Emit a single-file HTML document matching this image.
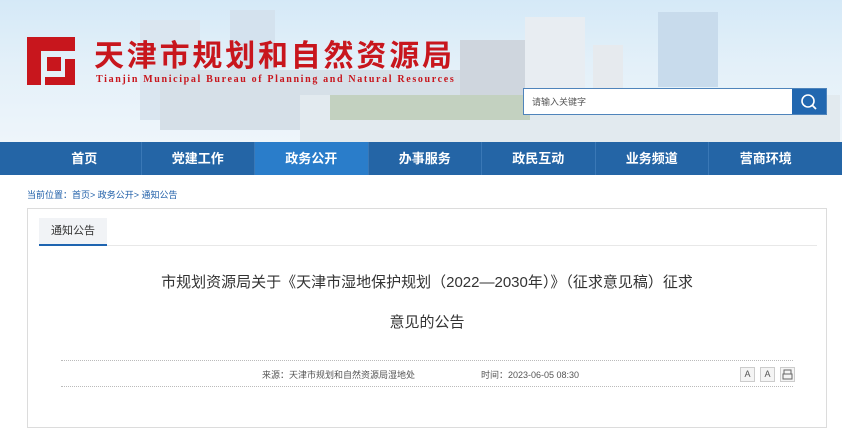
<!DOCTYPE html>
<html><head><meta charset="utf-8"><style>
*{margin:0;padding:0;box-sizing:border-box}
body{width:842px;height:414px;overflow:hidden;background:#fff;font-family:"Liberation Sans","Noto Sans CJK SC",sans-serif;position:relative}
.hdr{position:absolute;left:0;top:0;width:842px;height:142px;background:linear-gradient(180deg,#d5e9f7 0%,#e3f0f9 45%,#eef5fa 100%);overflow:hidden}
.b{position:absolute;background:#c9d8e6}
.nav{position:absolute;top:142px;left:0;width:842px;height:33px;background:#2465a6;display:flex;padding-left:28px}
.nav div{width:113.5px;height:33px;line-height:33px;text-align:center;color:#fff;font-size:13px;font-weight:bold;border-right:1px solid #3a78b6}
.nav div.on{background:#2a7dca}
</style></head><body>
<div class="hdr">
 <div class="b" style="left:140px;top:20px;width:60px;height:100px;background:#dae6f0"></div>
 <div class="b" style="left:230px;top:10px;width:45px;height:110px;background:#d4e2ee"></div>
 <div class="b" style="left:160px;top:70px;width:300px;height:60px;background:#d6e0e8"></div>
 <div class="b" style="left:460px;top:40px;width:100px;height:80px;background:#cfd6de"></div>
 <div class="b" style="left:525px;top:17px;width:60px;height:75px;background:#e8edf2"></div>
 <div class="b" style="left:593px;top:45px;width:30px;height:50px;background:#e6eaee"></div>
 <div class="b" style="left:658px;top:12px;width:60px;height:75px;background:#c8dbec"></div>
 <div class="b" style="left:300px;top:95px;width:540px;height:47px;background:#e2eaef"></div>
 <div class="b" style="left:330px;top:95px;width:200px;height:25px;background:#c3d1c0"></div>
 <svg style="position:absolute;left:27px;top:37px" width="48" height="48" viewBox="0 0 48 48"><path fill="#c8161d" d="M0 0H48V14H14V48H0Z M20 20H34V34H20Z M38 22H48V48H18V40H38Z"/></svg>
 <div style="position:absolute;left:94px;top:36px;font-size:30px;font-weight:bold;color:#c8161d;letter-spacing:2.8px;white-space:nowrap;font-family:'Noto Sans CJK SC',sans-serif;line-height:34px">天津市规划和自然资源局</div>
 <div style="position:absolute;left:96px;top:74px;font-size:10px;font-weight:bold;color:#c8161d;letter-spacing:1.65px;white-space:nowrap;font-family:'Liberation Serif',serif">Tianjin Municipal Bureau of Planning and Natural Resources</div>
 <div style="position:absolute;left:523px;top:88px;width:304px;height:27px;border:1px solid #4f84bb;background:#fff">
  <span style="position:absolute;left:8px;top:6px;font-size:9px;color:#555">请输入关键字</span>
  <div style="position:absolute;right:0;top:0;width:34px;height:25px;background:#2167b0">
   <svg width="34" height="25" viewBox="0 0 34 25"><circle cx="16" cy="12" r="6" fill="none" stroke="#fff" stroke-width="1.6"/><path d="M20.5 16.5L24 20" stroke="#fff" stroke-width="1.8"/></svg>
  </div>
 </div>
</div>
<div class="nav"><div>首页</div><div>党建工作</div><div class="on">政务公开</div><div>办事服务</div><div>政民互动</div><div>业务频道</div><div style="border:none">营商环境</div></div>
<div style="position:absolute;left:27px;top:188px;font-size:9px;color:#1e5ea8">当前位置：首页&gt; 政务公开&gt; 通知公告</div>
<div style="position:absolute;left:27px;top:208px;width:800px;height:220px;border:1px solid #dcdcdc">
 <div style="position:absolute;left:11px;top:9px;width:68px;height:28px;background:#f1f3f6;border-bottom:2px solid #1e64b0;font-size:11px;line-height:26px;text-align:center;color:#333">通知公告</div>
 <div style="position:absolute;left:79px;top:36px;width:710px;height:1px;background:#e8e8e8"></div>
 <div style="position:absolute;left:0;width:798px;top:64px;text-align:center;font-size:15px;color:#333;line-height:20px;white-space:nowrap">市规划资源局关于《天津市湿地保护规划（2022—2030年）》（征求意见稿）征求</div>
 <div style="position:absolute;left:0;width:798px;top:104px;text-align:center;font-size:15px;color:#333;line-height:20px">意见的公告</div>
 <div style="position:absolute;left:33px;top:151px;width:732px;border-top:1px dotted #bbb"></div>
 <div style="position:absolute;left:33px;top:177px;width:732px;border-top:1px dotted #bbb"></div>
 <div style="position:absolute;left:234px;top:159px;font-size:9px;color:#555;white-space:nowrap">来源：天津市规划和自然资源局湿地处</div>
 <div style="position:absolute;left:453px;top:159px;font-size:9px;color:#555;white-space:nowrap">时间：2023-06-05 08:30</div>
 <div style="position:absolute;left:712px;top:158px;width:15px;height:15px;border:1px solid #ccc;background:#f4f4f4;font-size:9px;text-align:center;line-height:13px;color:#555">A</div>
 <div style="position:absolute;left:732px;top:158px;width:15px;height:15px;border:1px solid #ccc;background:#f4f4f4;font-size:9px;text-align:center;line-height:13px;color:#555">A</div>
 <div style="position:absolute;left:752px;top:158px;width:15px;height:15px;border:1px solid #ccc;background:#f4f4f4"><svg width="13" height="13" viewBox="0 0 13 13"><rect x="3" y="2" width="7" height="4" fill="none" stroke="#666"/><rect x="2" y="6" width="9" height="5" fill="none" stroke="#666"/></svg></div>
</div>
</body></html>
